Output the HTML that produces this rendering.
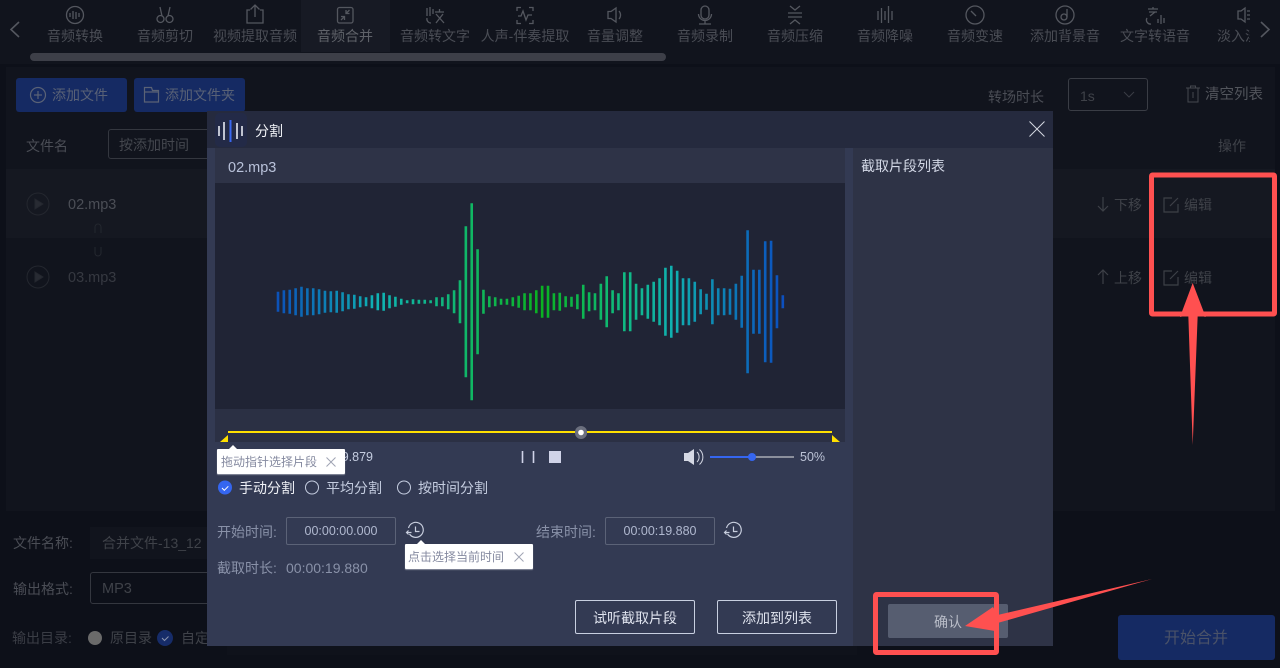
<!DOCTYPE html>
<html lang="zh-CN"><head><meta charset="utf-8"><title>音频合并</title>
<style>
html,body{margin:0;padding:0}
body{width:1280px;height:668px;overflow:hidden;background:#0d1019;position:relative;font-family:"Liberation Sans","Noto Sans CJK SC",sans-serif;font-size:14px}
.a,.t{position:absolute}
.t{white-space:nowrap;line-height:16px;height:16px;color:#4a4d55}
.c{transform:translateX(-50%)}
svg{position:absolute;overflow:visible;fill:none}
.n{stroke:#54575f;stroke-width:1.3}
</style></head><body>
<!-- top bar -->
<div class="a" style="left:0;top:0;width:1280px;height:64px;background:#11141d"></div>
<div class="a" style="left:301px;top:0;width:89px;height:52px;background:#171a24"></div>
<div class="a" style="left:30px;top:53px;width:636px;height:8px;border-radius:4px;background:#3d3f48"></div>
<svg class="n" style="left:0;top:0" width="1280" height="60" viewBox="0 0 1280 60">
<path d="M19 22l-8 7.500 8 7.500M1261 22l8 7.500-8 7.500" stroke-width="1.600"/>
<circle cx="75" cy="15" r="8.500"/><path d="M70 13v4M73 11v8M76 12v7M79 13v4"/>
<circle cx="160.500" cy="19" r="3.500"/><circle cx="169.500" cy="19" r="3.500"/><path d="M162 16l-2-9M168 16l2-9"/>
<path d="M250 10h-3v13h16V10h-3M255 17V5M250.500 9.500l4.500-4.500 4.500 4.500"/>
<rect x="337.500" y="7.500" width="15.500" height="15.500" rx="2"/><path d="M341 20l3.500-3.500M349.500 10l-3.500 3.500M341 16.500h3.500v3.500M346 10v3.500h3.500"/>
<path d="M427 8v8M430 7v9M433 9v5M427 18a4 4 0 0 0 4 5M435 12h9M439.500 9v3M436 14l8 9M443 14l-7 9"/>
<path d="M517 11V7.500h4M529 7.500h4V11M533 20v3.500h-4M521 23.500h-4V20M518 16h3l2-5 3 9 2-5h4"/>
<path d="M608 11.500h3l5-3.500v14l-5-3.500h-3zM619 11a6 6 0 0 1 0 8"/>
<rect x="701" y="6" width="8" height="13" rx="4"/><path d="M698.500 14a6.500 6.500 0 0 0 13 0M705 21v3M699 24h12"/>
<path d="M788 13h14M788 17h14M790 6l5 4 5-4M790 24l5-4 5 4"/>
<path d="M878 11v9M881.500 8v15M885 11v9M888.500 6v17M892 11v9"/>
<circle cx="975" cy="15" r="9"/><path d="M971 11l5 5"/>
<circle cx="1065" cy="15" r="9"/><circle cx="1064" cy="17" r="3"/><path d="M1067 17V9"/>
<path d="M1148 9h10M1153 7v2M1149 12h8M1155 12l-5 4M1147 18a4 4 0 0 0 4 6M1158 19v4M1161 15v9M1164 18v5"/>
<path d="M1238 11h3l4-3v14l-4-3h-3zM1247 11h3M1247 15h3M1247 19h3"/>
</svg>
<div class="a" style="left:30px;top:0;width:1220px;height:50px;overflow:hidden">
<div class="t c" style="left:45px;top:28px">音频转换</div>
<div class="t c" style="left:135px;top:28px">音频剪切</div>
<div class="t c" style="left:225px;top:28px">视频提取音频</div>
<div class="t c" style="left:315px;top:28px;color:#5f6269">音频合并</div>
<div class="t c" style="left:405px;top:28px">音频转文字</div>
<div class="t c" style="left:495px;top:28px">人声-伴奏提取</div>
<div class="t c" style="left:585px;top:28px">音量调整</div>
<div class="t c" style="left:675px;top:28px">音频录制</div>
<div class="t c" style="left:765px;top:28px">音频压缩</div>
<div class="t c" style="left:855px;top:28px">音频降噪</div>
<div class="t c" style="left:945px;top:28px">音频变速</div>
<div class="t c" style="left:1035px;top:28px">添加背景音</div>
<div class="t c" style="left:1125px;top:28px">文字转语音</div>
<div class="t c" style="left:1215px;top:28px">淡入淡出</div>
</div>
<!-- panel -->
<div class="a" style="left:6px;top:67px;width:1269px;height:444px;background:#11141d"></div>
<div class="a" style="left:6px;top:169px;width:1269px;height:69px;background:#151821"></div>
<div class="a" style="left:16px;top:78px;width:111px;height:34px;border-radius:3px;background:#152a63"></div>
<div class="a" style="left:134px;top:78px;width:111px;height:34px;border-radius:3px;background:#152a63"></div>
<svg style="left:0;top:0" width="260" height="120" stroke="#5a6276" stroke-width="1.200">
<circle cx="38" cy="95" r="7.500"/><path d="M34 95h8M38 91v8"/>
<path d="M144.500 87.500h7l1 3h6v11.500h-14zM144.500 92h14"/>
</svg>
<div class="t" style="left:52px;top:87px;color:#596176">添加文件</div>
<div class="t" style="left:165px;top:87px;color:#596176">添加文件夹</div>
<div class="t" style="left:988px;top:89px">转场时长</div>
<div class="a" style="left:1068px;top:78px;width:78px;height:31px;border:1px solid #3a3d45;border-radius:3px"></div>
<div class="t" style="left:1080px;top:88px;color:#3f4249;font-size:14px">1s</div>
<svg style="left:0;top:0" width="1280" height="300" stroke="#3a3d45">
<path d="M1124 92l5 5 5-5"/>
<path d="M1186 88h14M1190.500 88v-2h5v2M1188 88v14h10V88M1193 92v6" stroke="#45484f"/>
</svg>
<div class="t" style="left:1205px;top:87px;font-size:14.500px;color:#52555c">清空列表</div>
<div class="t" style="left:26px;top:138px">文件名</div>
<div class="a" style="left:108px;top:129px;width:120px;height:28px;border:1px solid #34373f;border-radius:3px"></div>
<div class="t" style="left:119px;top:137px;color:#44474e">按添加时间</div>
<div class="t" style="left:1218px;top:138px;color:#3f4249">操作</div>
<svg style="left:0;top:0" width="1280" height="320" stroke="#24272f">
<circle cx="38" cy="204" r="11"/><path d="M35 199l8 5-8 5z" fill="#282b33"/>
<circle cx="38" cy="277" r="11"/><path d="M35 272l8 5-8 5z" fill="#282b33"/>
<path d="M95 233v-6a3 3 0 0 1 6 0v6M95 247v6a3 3 0 0 0 6 0v-6"/>
<g stroke="#3d4047" stroke-width="1.200">
<path d="M1103 197v14M1098 206l5 5 5-5M1103 284v-14M1098 275l5-5 5 5"/>
<path d="M1172 198h-8v14h14v-8M1170 206l8-8M1172 271h-8v14h14v-8M1170 279l8-8"/>
</g>
</svg>
<div class="t" style="left:68px;top:197px;font-size:14.500px;color:#4b4e56">02.mp3</div>
<div class="t" style="left:68px;top:270px;font-size:14.500px;color:#363941">03.mp3</div>
<div class="t" style="left:1114px;top:197px;color:#3f4249">下移</div>
<div class="t" style="left:1114px;top:270px;color:#3f4249">上移</div>
<div class="t" style="left:1184px;top:197px;color:#3f4249">编辑</div>
<div class="t" style="left:1184px;top:270px;color:#3f4249">编辑</div>
<!-- bottom -->
<div class="t" style="left:13px;top:535px">文件名称:</div>
<div class="a" style="left:90px;top:527px;width:130px;height:32px;background:#11141d"></div>
<div class="t" style="left:102px;top:535px;color:#3f4249">合并文件-13_12</div>
<div class="t" style="left:13px;top:581px">输出格式:</div>
<div class="a" style="left:90px;top:572px;width:130px;height:30px;border:1px solid #34373f;border-radius:3px"></div>
<div class="t" style="left:102px;top:581px;font-size:14.500px;color:#3f4249">MP3</div>
<div class="t" style="left:12px;top:630px;color:#3a3d45">输出目录:</div>
<div class="a" style="left:88px;top:631px;width:14px;height:14px;border-radius:50%;background:#6a6a6a"></div>
<div class="t" style="left:110px;top:630px;color:#3f4249">原目录</div>
<div class="a" style="left:157px;top:630px;width:16px;height:16px;border-radius:50%;background:#162c69"></div>
<svg style="left:157px;top:630px" width="16" height="16" stroke="#8a93ad"><path d="M5 8l2.500 2.500 4-4"/></svg>
<div class="t" style="left:181px;top:630px;color:#3f4249">自定</div>
<div class="a" style="left:227px;top:646px;width:630px;height:9px;background:#0f121b"></div>
<div class="a" style="left:1118px;top:615px;width:157px;height:45px;border-radius:3px;background:#152a63"></div>
<div class="t c" style="left:1196px;top:631px;font-size:16px;color:#4a5268">开始合并</div>
<!-- dialog -->
<div class="a" style="left:207px;top:111px;width:846px;height:535px;background:#333a53"></div>
<div class="a" style="left:207px;top:111px;width:846px;height:37px;background:#252a3e"></div>
<div class="a" style="left:215px;top:148px;width:630px;height:35px;background:#2e3347"></div>
<div class="a" style="left:215px;top:183px;width:630px;height:226px;background:#202435"></div>
<div class="a" style="left:215px;top:409px;width:630px;height:33px;background:#2b3044"></div>
<div class="a" style="left:853px;top:148px;width:200px;height:498px;background:#2e3346"></div>
<div class="a" style="left:215px;top:113px;width:32px;height:34px;border-radius:5px;background:#232a47"></div>
<svg style="left:215px;top:113px" width="32" height="34">
<path d="M4 13v10M9 9v18M22 10v16M27 13v10" stroke="#e8ebf3" stroke-width="1.600"/><path d="M15.500 7v22" stroke="#3a68f0" stroke-width="2"/></svg>
<div class="t" style="left:255px;top:123px;color:#f2f4f8">分割</div>
<svg style="left:1029px;top:121px" width="16" height="16" stroke="#d5d8e2"><path d="M0.500 0.500l15 15M15.500 0.500l-15 15"/></svg>
<div class="t" style="left:228px;top:160px;font-size:14.500px;color:#b9c2da">02.mp3</div>
<div class="t" style="left:861px;top:158px;color:#d3d8e6">截取片段列表</div>
<svg style="left:0;top:0" width="1280" height="668">
<defs><linearGradient id="w" gradientUnits="userSpaceOnUse" x1="278" y1="0" x2="783" y2="0">
<stop offset="0" stop-color="#0c52b8"/><stop offset=".2" stop-color="#0fb4b4"/><stop offset=".38" stop-color="#10b765"/><stop offset=".52" stop-color="#0ab220"/><stop offset=".68" stop-color="#10bb80"/><stop offset=".78" stop-color="#10b0b0"/><stop offset=".92" stop-color="#0c70b8"/><stop offset="1" stop-color="#0c50c0"/></linearGradient></defs>
<path stroke="url(#w)" stroke-width="2.600" d="M278 301.700v10v-20v10m5.870 0v11.500v-23v11.500m5.870 0v12v-24v12m5.870 0v13.500v-27v13.500m5.870 0v15v-30v15m5.870 0v13.500v-27v13.500m5.870 0v13.500v-27v13.500m5.870 0v12.500v-25v12.500m5.870 0v11v-22v11m5.870 0v10.500v-21v10.500m5.870 0v11v-22v11m5.870 0v9.500v-19v9.500m5.870 0v7.500v-15v7.500m5.870 0v7v-14v7m5.870 0v5.500v-11v5.500m5.870 0v4.500v-9v4.500m5.870 0v6.500v-13v6.500m5.870 0v8.500v-17v8.500m5.870 0v9v-18v9m5.870 0v6.500v-13v6.500m5.870 0v5v-10v5m5.870 0v3v-6v3m5.870 0v1.500v-3v1.500m5.870 0v2.500v-5v2.500m5.870 0v2v-4v2m5.870 0v2v-4v2m5.870 0v1.500v-3v1.500m5.870 0v4.500v-9v4.500m5.870 0v4.500v-9v4.500m5.870 0v7.500v-15v7.500m5.870 0v11.500v-23v11.500m5.870 0v21.500v-43v21.500m5.870 0v75.500v-151v75.500m5.870 0v98.500v-197v98.500m5.870 0v52.500v-105v52.500m5.870 0v12v-24v12m5.870 0v5.500v-11v5.500m5.870 0v4.500v-9v4.500m5.870 0v3v-6v3m5.870 0v3v-6v3m5.870 0v4.500v-9v4.500m5.870 0v6v-12v6m5.870 0v8.500v-17v8.500m5.870 0v8.500v-17v8.500m5.870 0v11.500v-23v11.500m5.870 0v16v-32v16m5.870 0v16v-32v16m5.870 0v8.500v-17v8.500m5.870 0v9v-18v9m5.870 0v5.500v-11v5.500m5.870 0v5v-10v5m5.870 0v7.500v-15v7.500m5.870 0v17v-34v17m5.870 0v9.500v-19v9.500m5.870 0v8.500v-17v8.500m5.870 0v18v-36v18m5.870 0v25.500v-51v25.500m5.870 0v11.500v-23v11.500m5.870 0v8.500v-17v8.500m5.870 0v29.500v-59v29.500m5.870 0v29.500v-59v29.500m5.870 0v18v-36v18m5.870 0v13.500v-27v13.500m5.870 0v17v-34v17m5.870 0v20v-40v20m5.870 0v23.500v-47v23.500m5.870 0v34v-68v34m5.870 0v36v-72v36m5.870 0v31v-62v31m5.870 0v23.500v-47v23.500m5.870 0v23.500v-47v23.500m5.870 0v20v-40v20m5.870 0v12.500v-25v12.500m5.870 0v8v-16v8m5.870 0v22.500v-45v22.500m5.870 0v13.500v-27v13.500m5.870 0v13.500v-27v13.500m5.870 0v13v-26v13m5.870 0v18v-36v18m5.870 0v26v-52v26m5.870 0v71.500v-143v71.500m5.870 0v32v-64v32m5.870 0v32v-64v32m5.870 0v60.500v-121v60.500m5.870 0v61v-122v61m5.870 0v26.500v-53v26.500m5.870 0v6.500v-13v6.500"/>
<!-- slider -->
<path d="M228 432h604" stroke="#ffe000" stroke-width="2"/>
<path d="M228 435v7h-8zM832 435v7h8z" fill="#ffe000"/>
<rect x="575" y="426" width="12" height="13" rx="6" fill="#6b6f7e"/><circle cx="581" cy="432.500" r="2.800" fill="#fff"/>
<!-- player -->
<path d="M522.500 451v12M533.500 451v12" stroke="#d0d3e8" stroke-width="1.600"/>
<rect x="549" y="451" width="12" height="12" fill="#d0d3e8"/>
<path d="M684 453h4l6-4v16l-6-4h-4z" fill="#d5d8e4"/><path d="M697 452a7 7 0 0 1 0 10M699.500 449.500a10 10 0 0 1 0 15" stroke="#d5d8e4"/>
<path d="M710 457h42" stroke="#3566f0" stroke-width="2"/><path d="M752 457h42" stroke="#8b8f9c" stroke-width="2"/>
<circle cx="752" cy="457" r="4" fill="#3566f0"/>
<!-- radios -->
<circle cx="225" cy="487.500" r="7" fill="#3566f0"/><path d="M222 488l2.300 2.300 4-4" stroke="#fff"/>
<circle cx="312" cy="487.500" r="6.500" stroke="#c5cde0"/>
<circle cx="404" cy="487.500" r="6.500" stroke="#c5cde0"/>
<!-- clocks -->
<g stroke="#c8cede" stroke-width="1.200">
<path d="M408.500 528a7.500 7.500 0 1 1 1 6M415.500 526.500v5h4M406.500 532.500h5M408.500 530.500l-2 2 2 2"/>
<path d="M726.500 528a7.500 7.500 0 1 1 1 6M733.500 526.500v5h4M724.500 532.500h5M726.500 530.500l-2 2 2 2"/>
</g>
<!-- tips -->
<path d="M229 449l4-4 4 4zM417 544l4-4 4 4z" fill="#fff"/>
</svg>
<div class="t" style="left:337px;top:449px;width:36px;text-align:right;font-size:12.500px;color:#c5cde0">9.879</div>
<div class="a" style="left:217px;top:449px;width:128px;height:25px;background:#fff;border-radius:1px;box-shadow:0 1px 1px #8c90a0"></div>
<div class="t" style="left:221px;top:454px;font-size:12px;color:#858aa0">拖动指针选择片段</div>
<svg style="left:326px;top:457px" width="10" height="10" stroke="#a0a4b4"><path d="M.5.500l9 9M9.500.500l-9 9"/></svg>
<div class="t" style="left:800px;top:449px;font-size:12.500px;color:#bcc3d6">50%</div>
<div class="t" style="left:239px;top:480px;color:#f0f2f7">手动分割</div>
<div class="t" style="left:326px;top:480px;color:#c5cde0">平均分割</div>
<div class="t" style="left:418px;top:480px;color:#c5cde0">按时间分割</div>
<div class="t" style="left:217px;top:524px;color:#8991a8">开始时间:</div>
<div class="a" style="left:286px;top:517px;width:108px;height:26px;border:1px solid #5b6277;border-radius:2px"></div>
<div class="t c" style="left:341px;top:523px;font-size:12.500px;color:#b0b8cf">00:00:00.000</div>
<div class="t" style="left:536px;top:524px;color:#8991a8">结束时间:</div>
<div class="a" style="left:605px;top:517px;width:108px;height:26px;border:1px solid #5b6277;border-radius:2px"></div>
<div class="t c" style="left:660px;top:523px;font-size:12.500px;color:#b0b8cf">00:00:19.880</div>
<div class="a" style="left:405px;top:544px;width:128px;height:25px;background:#fff;border-radius:1px;box-shadow:0 1px 1px #8c90a0"></div>
<div class="t" style="left:408px;top:549px;font-size:12px;color:#858aa0">点击选择当前时间</div>
<svg style="left:514px;top:552px" width="10" height="10" stroke="#a0a4b4"><path d="M.5.500l9 9M9.500.500l-9 9"/></svg>
<div class="t" style="left:217px;top:560px;color:#8991a8">截取时长:</div>
<div class="t" style="left:286px;top:560px;font-size:14px;color:#8991a8">00:00:19.880</div>
<div class="a" style="left:575px;top:600px;width:118px;height:32px;border:1px solid #c8cfe0;border-radius:2px"></div>
<div class="t c" style="left:635px;top:610px;color:#dfe3ee">试听截取片段</div>
<div class="a" style="left:717px;top:600px;width:118px;height:32px;border:1px solid #c8cfe0;border-radius:2px"></div>
<div class="t c" style="left:777px;top:610px;color:#dfe3ee">添加到列表</div>
<div class="a" style="left:888px;top:604px;width:120px;height:34px;background:#565d70;border-radius:2px"></div>
<div class="t c" style="left:948px;top:614px;color:#b9bdc8">确认</div>
<!-- annotations -->
<svg style="left:0;top:0" width="1280" height="668">
<rect x="875.500" y="594.500" width="121" height="58" rx="1" stroke="#ff5050" stroke-width="5"/>
<rect x="1151.500" y="175" width="123" height="139" rx="1" stroke="#ff5050" stroke-width="5"/>
<path d="M1152 579L997.500 615L993 607L965 626L995 631L997.500 623Z" fill="#ff5050"/>
<path d="M1192.700 283L1180 317L1188.300 315L1192.700 445L1197.700 315L1205.700 317Z" fill="#ff5050"/>
</svg>
</body></html>
